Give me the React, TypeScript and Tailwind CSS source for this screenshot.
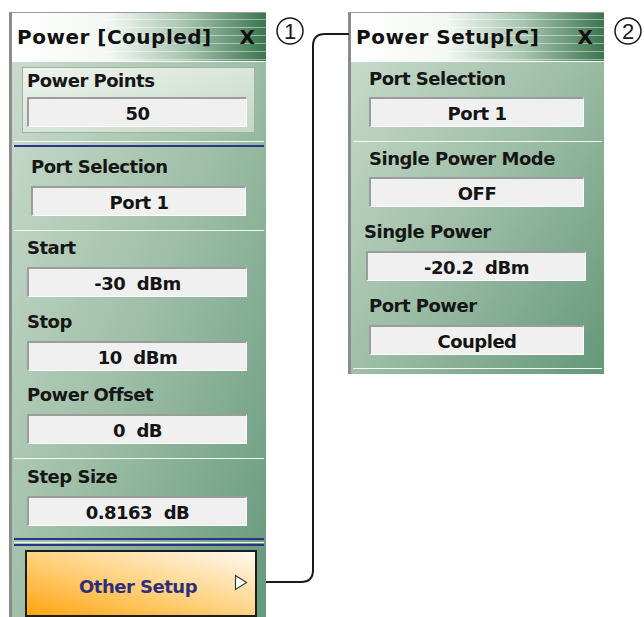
const font = "font-['DejaVu_Sans',sans-serif]";

const titleBg =
  "bg-[repeating-linear-gradient(to_bottom,transparent_0px,transparent_6px,rgba(255,255,255,0.45)_6px,rgba(255,255,255,0.45)_7px,transparent_7px,transparent_8px),linear-gradient(to_right,#ffffff_0%,#f3f7f3_38%,#a8c5b0_68%,#3b7550_100%)]";

const bodyBg = "bg-[linear-gradient(to_bottom_right,#cddecf,#9fbfa8_50%,#64977a)]";

const Field = ({ value, ml, w }: { value: string; ml: string; w: string }) => (
  <div
    className={`${ml} ${w} h-[30px] flex items-center justify-center bg-[#f0f0f0] border-t-2 border-l-2 border-b border-r border-t-[#9c9c9c] border-l-[#9c9c9c] border-b-white border-r-white text-[18px] tracking-[-0.5px] font-bold text-[#141414] leading-none whitespace-pre pt-[2px]`}
  >
    {value}
  </div>
);

const Label = ({ text, className }: { text: string; className: string }) => (
  <div className={`h-[18px] leading-[18px] text-[18px] tracking-[-0.5px] font-bold text-[#161616] whitespace-nowrap ${className}`}>
    {text}
  </div>
);

const TitleBar = ({ title }: { title: string }) => (
  <div className={`h-[49px] flex items-center justify-between pl-[5px] pr-[11px] ${titleBg} border-b border-b-white`}>
    <span className="text-[20px] tracking-[0.5px] font-bold text-[#111] whitespace-nowrap">{title}</span>
    <span className="text-[20px] font-bold text-[#111]">X</span>
  </div>
);

const WhiteLine = ({ className }: { className: string }) => (
  <div className={`h-px bg-[#f4f7f4] ${className}`} />
);

const BlueLine = ({ className }: { className: string }) => (
  <div className={`h-[2px] bg-[#2b3585] ${className}`} />
);

const PowerPanel = () => (
  <div className={`w-[257px] h-[620px] border-t border-t-[#9a9a9a] border-l-[3px] border-l-[#8c8c8c] flex flex-col ${bodyBg}`}>
    <TitleBar title="Power [Coupled]" />
    <div className="ml-[10px] mt-[5px] w-[233px] h-[66px] border border-[#a4b2a6] bg-[linear-gradient(to_bottom_right,#eef4ee,#c3d7c6)] flex flex-col">
      <Label text="Power Points" className="ml-[4px] mt-[4px]" />
      <div className="mt-[7px]">
        <Field value="50" ml="ml-[4px]" w="w-[220px]" />
      </div>
    </div>
    <WhiteLine className="mt-[8px] mx-[2px]" />
    <BlueLine className="mt-[3px] mx-[2px]" />
    <Label text="Port Selection" className="ml-[19px] mt-[11px]" />
    <div className="mt-[10px]">
      <Field value="Port 1" ml="ml-[19px]" w="w-[215px]" />
    </div>
    <WhiteLine className="mt-[14px] mx-[2px]" />
    <Label text="Start" className="ml-[15px] mt-[8px]" />
    <div className="mt-[10px]">
      <Field value="-30  dBm" ml="ml-[15px]" w="w-[220px]" />
    </div>
    <Label text="Stop" className="ml-[15px] mt-[16px]" />
    <div className="mt-[10px]">
      <Field value="10  dBm" ml="ml-[15px]" w="w-[220px]" />
    </div>
    <Label text="Power Offset" className="ml-[15px] mt-[15px]" />
    <div className="mt-[10px]">
      <Field value="0  dB" ml="ml-[15px]" w="w-[220px]" />
    </div>
    <WhiteLine className="mt-[14px] mx-[2px]" />
    <Label text="Step Size" className="ml-[15px] mt-[9px]" />
    <div className="mt-[10px]">
      <Field value="0.8163  dB" ml="ml-[15px]" w="w-[220px]" />
    </div>
    <BlueLine className="mt-[12px] mx-[2px]" />
    <WhiteLine className="mt-[2px] mx-[2px]" />
    <BlueLine className="mt-[1px] mx-[2px]" />
    <div className="ml-[13px] mt-[4px] w-[232px] h-[67px] relative border-2 border-[#1c1c1c] bg-[linear-gradient(to_top_right,#ffa410,#ffcf78_45%,#fff9f1)] flex items-center justify-center pt-[6px] pr-[6px]">
      <span className="text-[18px] tracking-[-0.5px] font-bold text-[#2e2f7c] whitespace-nowrap">Other Setup</span>
      <svg className="absolute right-[7px] top-[22px]" width="14" height="17" viewBox="0 0 14 17">
        <path d="M1.5 1.5 L12.5 8.5 L1.5 15.5 Z" fill="#ffffff" stroke="#3a3a3a" strokeWidth="1.2" />
      </svg>
    </div>
  </div>
);

const SetupPanel = () => (
  <div className={`w-[256px] h-[362px] border-t border-t-[#9a9a9a] border-l-[3px] border-l-[#8c8c8c] flex flex-col ${bodyBg}`}>
    <TitleBar title="Power Setup[C]" />
    <Label text="Port Selection" className="ml-[18px] mt-[8px]" />
    <div className="mt-[9px]">
      <Field value="Port 1" ml="ml-[18px]" w="w-[215px]" />
    </div>
    <WhiteLine className="mt-[14px] mx-[2px]" />
    <Label text="Single Power Mode" className="ml-[18px] mt-[8px]" />
    <div className="mt-[9px]">
      <Field value="OFF" ml="ml-[18px]" w="w-[215px]" />
    </div>
    <Label text="Single Power" className="ml-[13px] mt-[16px]" />
    <div className="mt-[10px]">
      <Field value="-20.2  dBm" ml="ml-[15px]" w="w-[220px]" />
    </div>
    <Label text="Port Power" className="ml-[18px] mt-[16px]" />
    <div className="mt-[10px]">
      <Field value="Coupled" ml="ml-[18px]" w="w-[215px]" />
    </div>
    <WhiteLine className="mt-[13px] mx-[2px]" />
  </div>
);

export default function App() {
  return (
    <div className={`relative w-[644px] h-[617px] overflow-hidden bg-white ${font}`}>
      <div className="flex items-start pl-[9px] pt-[12px]">
        <PowerPanel />
        <div className="ml-[82px]">
          <SetupPanel />
        </div>
      </div>
      <svg className="absolute left-0 top-0 pointer-events-none" width="644" height="617" viewBox="0 0 644 617">
        <path d="M266 582 H301 Q313 582 313 570 V46 Q313 34 325 34 H349" fill="none" stroke="#1a1a1a" strokeWidth="2" />
        <circle cx="290" cy="31" r="13" fill="#fff" stroke="#1a1a1a" strokeWidth="1.5" />
        <text x="290" y="39" textAnchor="middle" fontSize="22" fontFamily="Liberation Sans, sans-serif" fill="#1a1a1a">1</text>
        <circle cx="628" cy="31" r="13" fill="#fff" stroke="#1a1a1a" strokeWidth="1.5" />
        <text x="628" y="39" textAnchor="middle" fontSize="22" fontFamily="Liberation Sans, sans-serif" fill="#1a1a1a">2</text>
      </svg>
    </div>
  );
}
